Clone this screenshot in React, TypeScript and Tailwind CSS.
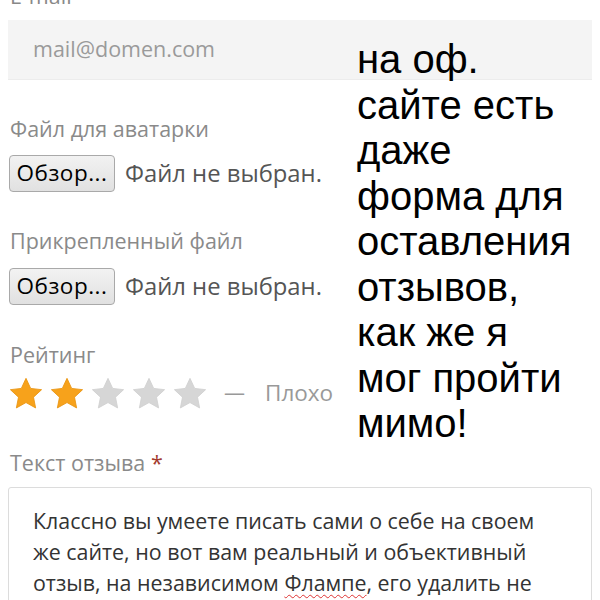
import React from 'react';

const Star = ({ filled }: { filled: boolean }) => (
  <svg width="34" height="33" viewBox="0 0 24 23" className="shrink-0">
    <path
      d="M12 0.8l3.3 7.1 7.7 0.9-5.7 5.3 1.5 7.6L12 17.9l-6.8 3.8 1.5-7.6L1 8.8l7.7-0.9z"
      fill={filled ? '#f7a21b' : '#d6d6d6'}
      stroke={filled ? '#e8940f' : '#d0d0d0'}
      strokeWidth="0.6"
      strokeLinejoin="round"
    />
  </svg>
);

const FileRow = () => (
  <div className="flex items-center h-[37px]">
    <button className="h-[37px] w-[106px] rounded-[4px] border border-[#a9a9a9] bg-gradient-to-b from-[#f2f2f2] to-[#e1e1e1] text-[22.5px] text-black leading-none tracking-[0.5px]">
      Обзор...
    </button>
    <span className="ml-[10px] text-[23.8px] text-[#555]">Файл не выбран.</span>
  </div>
);

const App = () => {
  const rating = 2;

  return (
    <div className="relative w-[600px] h-[600px] overflow-hidden bg-white font-['Open_Sans',sans-serif]">
      <div className="px-[8px] -mt-[17px]">
        {/* E-mail */}
        <div className="text-[21.5px] leading-[26px] text-[#888] pl-[2px]">E-mail</div>
        <div className="mt-[11px] h-[60px] bg-[#f4f4f4] border-b border-[#ececec] flex items-center pl-[25px]">
          <span className="text-[21.5px] text-[#9a9a9a]">mail@domen.com</span>
        </div>

        {/* Avatar */}
        <div className="mt-[36px] text-[21.5px] leading-[26px] text-[#8a8a8a] pl-[2px]">Файл для аватарки</div>
        <div className="mt-[13px] pl-[1px]">
          <FileRow />
        </div>

        {/* Attached file */}
        <div className="mt-[36px] text-[21.5px] leading-[26px] text-[#8a8a8a] pl-[2px]">Прикрепленный файл</div>
        <div className="mt-[14px] pl-[1px]">
          <FileRow />
        </div>

        {/* Rating */}
        <div className="mt-[37px] text-[21.5px] leading-[26px] text-[#8a8a8a] pl-[2px]">Рейтинг</div>
        <div className="mt-[8px] flex items-center h-[34px]">
          <div className="flex gap-[7px] pl-[1px]">
            {[1, 2, 3, 4, 5].map((i) => (
              <Star key={i} filled={i <= rating} />
            ))}
          </div>
          <span className="ml-[17px] text-[21px] text-[#999]">—</span>
          <span className="ml-[20px] text-[22.5px] text-[#999]">Плохо</span>
        </div>

        {/* Review text */}
        <div className="mt-[40px] text-[21.5px] leading-[26px] text-[#8a8a8a] pl-[2px]">
          Текст отзыва <span className="text-[#a33a2e]">*</span>
        </div>
        <div className="mt-[11px] border border-[#dcdcdc] rounded-[3px] pl-[24px] pr-[30px] pt-[17px] h-[140px]">
          <p className="text-[21.4px] leading-[31px] text-[#333]">
            Классно вы умеете писать сами о себе на своем же сайте, но вот вам реальный и объективный отзыв, на
            независимом{' '}
            <span className="underline decoration-wavy decoration-[#d33] decoration-1 underline-offset-[3px]">Флампе</span>,
            его удалить не получится.
          </p>
        </div>
      </div>

      {/* Caption over the form */}
      <div className="absolute left-[357px] top-[37px] w-[243px] font-['Liberation_Sans',Arial,sans-serif] text-[40px] leading-[45.5px] text-black">
        на оф.
        <br />
        сайте есть
        <br />
        даже
        <br />
        форма для
        <br />
        оставления
        <br />
        отзывов,
        <br />
        как же я
        <br />
        мог пройти
        <br />
        мимо!
      </div>
    </div>
  );
};

export default App;
